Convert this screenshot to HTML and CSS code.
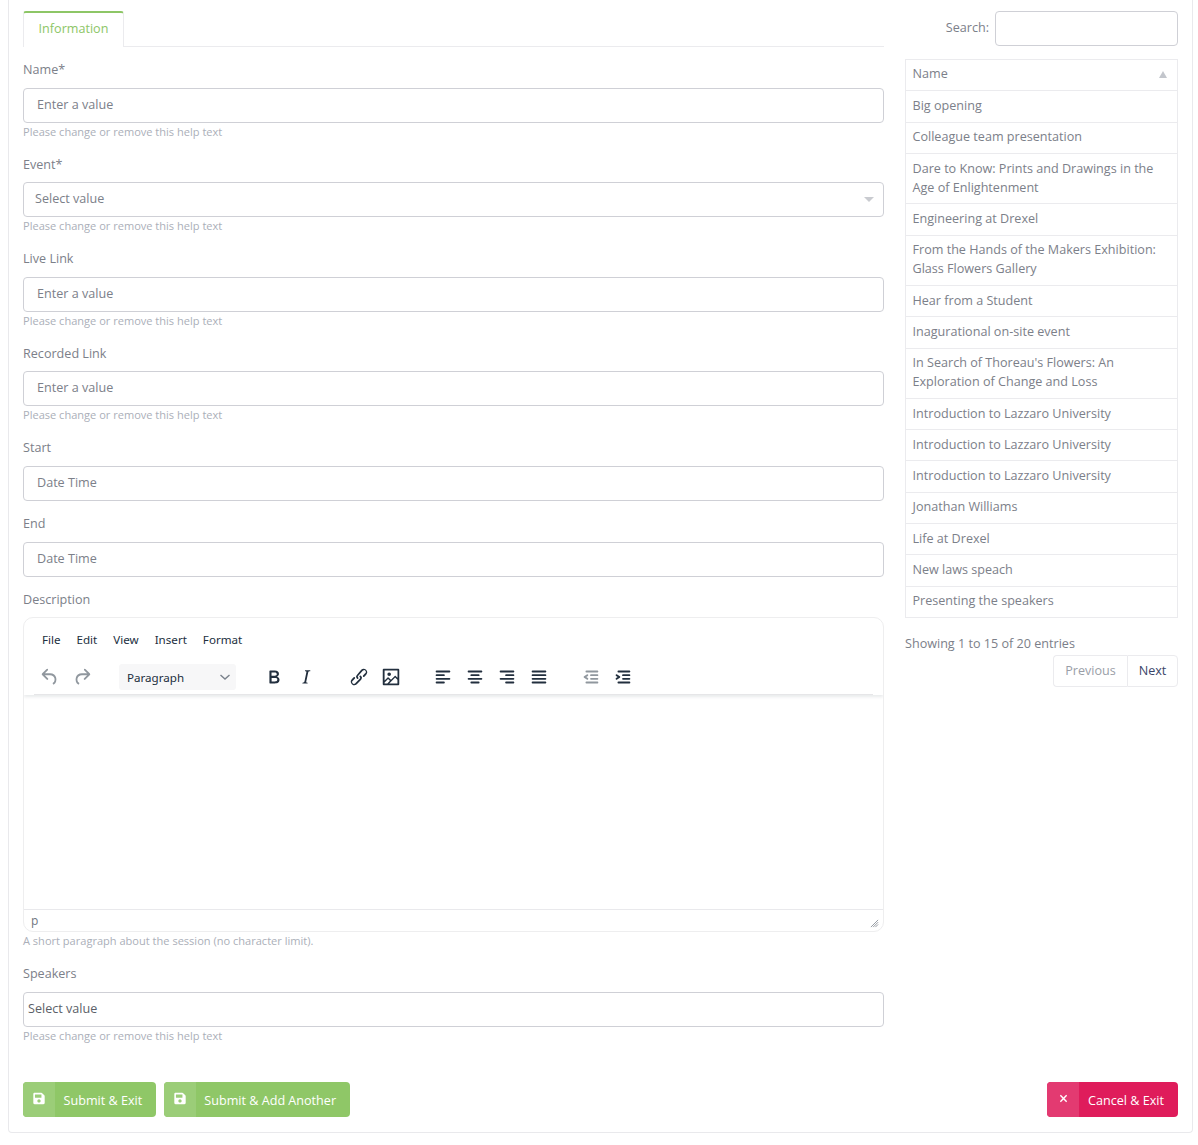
FILE: index.html
```html
<!DOCTYPE html>
<html lang="en">
<head>
<meta charset="utf-8">
<title>Session form</title>
<link rel="stylesheet" href="styles.css">
</head>
<body>
<main class="card">
  <div class="columns">
    <form class="form-col">
      <div class="tabs"><a class="tab">Information</a></div>

      <div class="group">
        <label class="label">Name*</label>
        <div class="input">Enter a value</div>
        <div class="help">Please change or remove this help text</div>
      </div>
      <div class="group">
        <label class="label">Event*</label>
        <div class="input select"><span>Select value</span><i class="caret"></i></div>
        <div class="help">Please change or remove this help text</div>
      </div>
      <div class="group">
        <label class="label">Live Link</label>
        <div class="input">Enter a value</div>
        <div class="help">Please change or remove this help text</div>
      </div>
      <div class="group">
        <label class="label">Recorded Link</label>
        <div class="input">Enter a value</div>
        <div class="help">Please change or remove this help text</div>
      </div>
      <div class="group compact">
        <label class="label">Start</label>
        <div class="input">Date Time</div>
      </div>
      <div class="group">
        <label class="label">End</label>
        <div class="input">Date Time</div>
      </div>
      <div class="group">
        <label class="label">Description</label>
        <div class="editor">
          <div class="editor-head">
            <div class="menubar">
              <span>File</span><span>Edit</span><span>View</span><span>Insert</span><span>Format</span>
            </div>
            <div class="toolbar">
              <div class="tool-group">
                <button type="button" class="tool off"><svg viewBox="0 0 24 24"><path d="M6.4 8H12c3.7 0 6.2 2 6.8 5.1.6 2.7-.4 5.6-2.3 6.8a1 1 0 0 1-1-1.8c1.1-.6 1.8-2.7 1.4-4.6-.5-2.1-2.1-3.5-4.9-3.5H6.4l3.3 3.3a1 1 0 1 1-1.4 1.4l-5-5a1 1 0 0 1 0-1.4l5-5a1 1 0 0 1 1.4 1.4L6.4 8z"/></svg></button>
                <button type="button" class="tool off"><svg viewBox="0 0 24 24"><path transform="matrix(-1 0 0 1 24 0)" d="M6.4 8H12c3.7 0 6.2 2 6.8 5.1.6 2.7-.4 5.6-2.3 6.8a1 1 0 0 1-1-1.8c1.1-.6 1.8-2.7 1.4-4.6-.5-2.1-2.1-3.5-4.9-3.5H6.4l3.3 3.3a1 1 0 1 1-1.4 1.4l-5-5a1 1 0 0 1 0-1.4l5-5a1 1 0 0 1 1.4 1.4L6.4 8z"/></svg></button>
              </div>
              <div class="format-select"><span>Paragraph</span><svg viewBox="0 0 10 10"><path d="M.5 3l4.5 4 4.5-4"/></svg></div>
              <div class="tool-group gap-bold">
                <button type="button" class="tool"><svg viewBox="0 0 24 24"><path d="M7.8 19c-.3 0-.5 0-.6-.2l-.2-.5V5.7c0-.2 0-.4.2-.5l.6-.2h5c1.5 0 2.7.3 3.5 1 .7.6 1.1 1.4 1.1 2.5a3 3 0 0 1-.6 1.9c-.4.6-1 1-1.6 1.2.4.1.9.3 1.3.6s.8.7 1 1.2c.4.4.5 1 .5 1.6 0 1.3-.4 2.3-1.3 3-.8.7-2.1 1-3.8 1H7.8zm5-8.3c.6 0 1.2-.1 1.6-.5.4-.3.6-.7.6-1.3 0-1.1-.8-1.7-2.3-1.7H9.3v3.5h3.4zm.5 6c.7 0 1.3-.1 1.7-.4.4-.4.6-.9.6-1.5s-.2-1-.7-1.4c-.4-.3-1-.4-2-.4H9.4v3.8h4z"/></svg></button>
                <button type="button" class="tool"><svg viewBox="0 0 24 24"><path d="M16.7 4.7l-.1.9h-.3c-.6 0-1 0-1.4.3-.3.3-.4.6-.5 1.1l-2.1 9.8v.6c0 .5.4.8 1.4.8h.2l-.2.8H8l.2-.8h.2c1.1 0 1.8-.5 2-1.5l2-9.8.1-.5c0-.6-.4-.8-1.4-.8h-.3l.2-.9h5.8z"/></svg></button>
              </div>
              <div class="tool-group gap-link">
                <button type="button" class="tool"><svg viewBox="0 0 24 24"><path d="M6.2 12.3a1 1 0 0 1 1.4 1.4l-2 2a2 2 0 1 0 2.6 2.8l4.8-4.8a1 1 0 0 0 0-1.4 1 1 0 1 1 1.4-1.3 2.9 2.9 0 0 1 0 4L9.6 20a3.9 3.9 0 0 1-5.5-5.5l2-2.2zm11.6-.6a1 1 0 0 1-1.4-1.4l2-2a2 2 0 1 0-2.6-2.8L11 10.9a1 1 0 0 0 0 1.4 1 1 0 1 1-1.4 1.4 2.9 2.9 0 0 1 0-4L14.4 4a3.9 3.9 0 0 1 5.5 5.5l-2 2.2z"/></svg></button>
                <button type="button" class="tool"><svg viewBox="0 0 24 24"><path d="M5 15.7l3.3-3.2c.3-.3.7-.3 1 0L12 15l4.1-4c.3-.4.8-.4 1 0l2 1.9V5H5v10.7zM5 18V19h3l2.8-2.9-2-2L5 17.9zm14-3l-2.5-2.4-6.4 6.5H19v-4zM4 3h16c.6 0 1 .4 1 1v16c0 .6-.4 1-1 1H4a1 1 0 0 1-1-1V4c0-.6.4-1 1-1zm6 8a2 2 0 1 0 0-4 2 2 0 0 0 0 4z"/></svg></button>
              </div>
              <div class="tool-group gap-align">
                <button type="button" class="tool"><svg viewBox="0 0 24 24"><path d="M5 5h14c.6 0 1 .4 1 1s-.4 1-1 1H5a1 1 0 1 1 0-2zm0 4h8c.6 0 1 .4 1 1s-.4 1-1 1H5a1 1 0 1 1 0-2zm0 8h8c.6 0 1 .4 1 1s-.4 1-1 1H5a1 1 0 0 1 0-2zm0-4h14c.6 0 1 .4 1 1s-.4 1-1 1H5a1 1 0 0 1 0-2z"/></svg></button>
                <button type="button" class="tool"><svg viewBox="0 0 24 24"><path d="M5 5h14c.6 0 1 .4 1 1s-.4 1-1 1H5a1 1 0 1 1 0-2zm3 4h8c.6 0 1 .4 1 1s-.4 1-1 1H8a1 1 0 1 1 0-2zm0 8h8c.6 0 1 .4 1 1s-.4 1-1 1H8a1 1 0 0 1 0-2zm-3-4h14c.6 0 1 .4 1 1s-.4 1-1 1H5a1 1 0 0 1 0-2z"/></svg></button>
                <button type="button" class="tool"><svg viewBox="0 0 24 24"><path d="M5 5h14c.6 0 1 .4 1 1s-.4 1-1 1H5a1 1 0 1 1 0-2zm6 4h8c.6 0 1 .4 1 1s-.4 1-1 1h-8a1 1 0 0 1 0-2zm0 8h8c.6 0 1 .4 1 1s-.4 1-1 1h-8a1 1 0 0 1 0-2zm-6-4h14c.6 0 1 .4 1 1s-.4 1-1 1H5a1 1 0 0 1 0-2z"/></svg></button>
                <button type="button" class="tool narrow"><svg viewBox="0 0 24 24"><path d="M5 5h14c.6 0 1 .4 1 1s-.4 1-1 1H5a1 1 0 1 1 0-2zm0 4h14c.6 0 1 .4 1 1s-.4 1-1 1H5a1 1 0 1 1 0-2zm0 4h14c.6 0 1 .4 1 1s-.4 1-1 1H5a1 1 0 0 1 0-2zm0 4h14c.6 0 1 .4 1 1s-.4 1-1 1H5a1 1 0 0 1 0-2z"/></svg></button>
              </div>
              <div class="tool-group gap-link">
                <button type="button" class="tool off"><svg viewBox="0 0 24 24"><path d="M7 5h12c.6 0 1 .4 1 1s-.4 1-1 1H7a1 1 0 1 1 0-2zm5 4h7c.6 0 1 .4 1 1s-.4 1-1 1h-7a1 1 0 0 1 0-2zm0 4h7c.6 0 1 .4 1 1s-.4 1-1 1h-7a1 1 0 0 1 0-2zm-5 4h12a1 1 0 0 1 0 2H7a1 1 0 0 1 0-2zm1.6-3.8a1 1 0 0 1-1.2 1.6l-3-2a1 1 0 0 1 0-1.6l3-2a1 1 0 0 1 1.2 1.6L6.8 12l1.8 1.2z"/></svg></button>
                <button type="button" class="tool"><svg viewBox="0 0 24 24"><path d="M7 5h12c.6 0 1 .4 1 1s-.4 1-1 1H7a1 1 0 1 1 0-2zm5 4h7c.6 0 1 .4 1 1s-.4 1-1 1h-7a1 1 0 0 1 0-2zm0 4h7c.6 0 1 .4 1 1s-.4 1-1 1h-7a1 1 0 0 1 0-2zm-5 4h12a1 1 0 0 1 0 2H7a1 1 0 0 1 0-2zm-2.6-3.8L6.2 12l-1.8-1.2a1 1 0 0 1 1.2-1.6l3 2a1 1 0 0 1 0 1.6l-3 2a1 1 0 1 1-1.2-1.6z"/></svg></button>
              </div>
            </div>
          </div>
          <div class="editor-body"></div>
          <div class="statusbar"><span>p</span><svg class="grip" viewBox="0 0 10 10"><path d="M9 1L1 9M9 3.5L3.5 9M9 6L6 9"/></svg></div>
        </div>
        <div class="help">A short paragraph about the session (no character limit).</div>
      </div>
      <div class="group">
        <label class="label">Speakers</label>
        <div class="input plain">Select value</div>
        <div class="help">Please change or remove this help text</div>
      </div>
    </form>

    <aside class="side-col">
      <div class="search"><label>Search:</label><div class="search-box"></div></div>
      <div class="table">
        <div class="row head"><span>Name</span><i class="sort"></i></div>
        <div class="row">Big opening</div>
        <div class="row">Colleague team presentation</div>
        <div class="row">Dare to Know: Prints and Drawings in the Age of Enlightenment</div>
        <div class="row">Engineering at Drexel</div>
        <div class="row">From the Hands of the Makers Exhibition: Glass Flowers Gallery</div>
        <div class="row">Hear from a Student</div>
        <div class="row">Inagurational on-site event</div>
        <div class="row">In Search of Thoreau's Flowers: An Exploration of Change and Loss</div>
        <div class="row">Introduction to Lazzaro University</div>
        <div class="row">Introduction to Lazzaro University</div>
        <div class="row">Introduction to Lazzaro University</div>
        <div class="row">Jonathan Williams</div>
        <div class="row">Life at Drexel</div>
        <div class="row">New laws speach</div>
        <div class="row">Presenting the speakers</div>
      </div>
      <div class="info">Showing 1 to 15 of 20 entries</div>
      <div class="pager"><span class="page muted">Previous</span><span class="page active">Next</span></div>
    </aside>
  </div>

  <div class="actions">
    <div class="action-left">
      <a class="btn green"><span class="btn-icon"><svg viewBox="0 0 448 512"><path d="M433.9 129.9l-83.9-83.9A48 48 0 0 0 316.1 32H48C21.5 32 0 53.5 0 80v352c0 26.5 21.5 48 48 48h352c26.5 0 48-21.5 48-48V163.9a48 48 0 0 0-14.1-34zM224 416c-35.3 0-64-28.7-64-64s28.7-64 64-64 64 28.7 64 64-28.7 64-64 64zm96-304.5V212c0 6.6-5.4 12-12 12H76c-6.6 0-12-5.4-12-12V108c0-6.6 5.4-12 12-12h228.5c3.2 0 6.2 1.3 8.5 3.5l3.5 3.5c2.2 2.2 3.5 5.3 3.5 8.5z"/></svg></span><span class="btn-text">Submit &amp; Exit</span></a>
      <a class="btn green"><span class="btn-icon"><svg viewBox="0 0 448 512"><path d="M433.9 129.9l-83.9-83.9A48 48 0 0 0 316.1 32H48C21.5 32 0 53.5 0 80v352c0 26.5 21.5 48 48 48h352c26.5 0 48-21.5 48-48V163.9a48 48 0 0 0-14.1-34zM224 416c-35.3 0-64-28.7-64-64s28.7-64 64-64 64 28.7 64 64-28.7 64-64 64zm96-304.5V212c0 6.6-5.4 12-12 12H76c-6.6 0-12-5.4-12-12V108c0-6.6 5.4-12 12-12h228.5c3.2 0 6.2 1.3 8.5 3.5l3.5 3.5c2.2 2.2 3.5 5.3 3.5 8.5z"/></svg></span><span class="btn-text">Submit &amp; Add Another</span></a>
    </div>
    <a class="btn pink"><span class="btn-icon"><svg viewBox="0 0 10 10"><path class="x" d="M1.5 1.5l7 7M8.5 1.5l-7 7"/></svg></span><span class="btn-text">Cancel &amp; Exit</span></a>
  </div>
</main>
</body>
</html>
```

FILE: styles.css
```css
* { box-sizing: border-box; }
html, body { margin: 0; padding: 0; background: #fff; }
body {
  font-family: "Open Sans", "Liberation Sans", sans-serif;
  font-size: 12.6px;
  color: #7c8089;
}
.card {
  margin: 0 5px 12px 8px;
  height: 1133px;
  padding: 11px 14px 15px;
  border: 1px solid #e9e9ec;
  border-top: 0;
  border-radius: 0 0 4px 4px;
  display: flex;
  flex-direction: column;
  justify-content: space-between;
}
.columns { display: flex; gap: 21px; align-items: flex-start; }
.form-col { width: 861px; flex: none; }
.side-col { width: 273px; flex: none; }

.tabs { height: 36px; border-bottom: 1px solid #ebebee; margin-bottom: 12.3px; }
.tab {
  display: block;
  width: 101px;
  height: 36px;
  border: 1px solid #ebebee;
  border-top: 2px solid #8dc666;
  border-bottom: 0;
  border-radius: 3px 3px 0 0;
  background: #fff;
  color: #8dc666;
  text-align: center;
  line-height: 31px;
}

.group { margin-bottom: 11.95px; }
.group.compact { margin-bottom: 12.3px; }
.label { display: block; height: 20px; line-height: 22.6px; margin-bottom: 8.5px; }
.input {
  height: 35.1px;
  border: 1px solid #cfd0d6;
  border-radius: 4px;
  padding: 0 13px;
  line-height: 31px;
  color: #7c8089;
}
.select { display: flex; justify-content: space-between; align-items: center; padding: 0 9px 3px 11px; }
.caret {
  width: 0; height: 0;
  border-left: 5px solid transparent;
  border-right: 5px solid transparent;
  border-top: 5px solid #c9cbd0;
  margin-top: 3px;
}
.plain { padding: 0 4px; color: #5c5f68; }
.help { height: 19px; line-height: 18px; font-size: 11.06px; color: #abafb9; }

.editor {
  height: 315px;
  border: 1px solid #eeeeef;
  border-radius: 10px;
  display: flex;
  flex-direction: column;
  overflow: hidden;
}
.editor-head { height: 77px; padding: 0 10px; box-shadow: 0 2px 3px rgba(34, 47, 62, .1); position: relative; }
.menubar {
  height: 45px;
  padding: 13px 0 0 8px;
  display: flex;
  gap: 16px;
  font-family: "Noto Sans", "Open Sans", sans-serif;
  font-size: 11.6px;
  line-height: 18px;
  color: #222f3e;
}
.toolbar {
  box-sizing: content-box;
  height: 28px;
  padding-bottom: 3px;
  display: flex;
  align-items: center;
  border-bottom: 1px solid #e6e6e8;
}
.tool-group { display: flex; }
.gap-bold { margin-left: 22px; }
.gap-link { margin-left: 21px; }
.gap-align { margin-left: 20px; }
.tool {
  width: 32px;
  height: 28px;
  padding: 0;
  border: 0;
  background: none;
  display: flex;
  align-items: center;
  justify-content: center;
}
.tool.narrow { width: 31px; }
.tool svg { width: 22px; height: 22px; flex: none; fill: #222f3e; }
.tool.off svg { fill: rgba(34, 47, 62, .5); }
.format-select {
  width: 117px;
  height: 26px;
  margin-left: 21px;
  padding: 0 6px 0 8px;
  border-radius: 3px;
  background: #f7f7f8;
  display: flex;
  align-items: center;
  justify-content: space-between;
  font-family: "Noto Sans", "Open Sans", sans-serif;
  font-size: 11.6px;
  color: #222f3e;
}
.format-select svg { width: 10px; height: 10px; fill: none; stroke: #7a828c; stroke-width: 1.4; }
.editor-body { flex: 1; }
.statusbar {
  height: 22px;
  border-top: 1px solid #e9e9ec;
  padding: 0 7px;
  display: flex;
  align-items: center;
  justify-content: space-between;
  color: #6f7680;
  font-size: 12px;
}
.grip { width: 9px; height: 9px; margin: 5px -3px 0 0; fill: none; stroke: #8c929a; stroke-width: 1; }

.search { height: 35px; display: flex; justify-content: flex-end; align-items: center; gap: 6px; margin-bottom: 13px; }
.search label { margin-top: -2px; }
.search-box { width: 183px; height: 35px; border: 1px solid #cfd0d6; border-radius: 4px; }
.table { border: 1px solid #ebebee; border-bottom: 0; }
.row {
  padding: 4.7px 6.5px 6.64px;
  line-height: 19px;
  border-bottom: 1px solid #ebebee;
}
.head { display: flex; justify-content: space-between; align-items: center; padding: 4.37px 10px 6.97px 6.5px; }
.sort {
  width: 0; height: 0;
  border-left: 4px solid transparent;
  border-right: 4px solid transparent;
  border-bottom: 7px solid #c3c6cc;
  margin-top: 1px;
}
.info { margin-top: 16px; line-height: 19px; }
.pager { display: flex; justify-content: flex-end; margin-top: 2px; }
.page { height: 32px; line-height: 29px; padding: 0 11px; border: 1px solid #ebebee; }
.page.muted { width: 74px; text-align: center; padding: 0; border-right: 0; border-radius: 4px 0 0 4px; color: #9a9ea7; }
.page.active { width: 51px; text-align: center; padding: 0; border-radius: 0 4px 4px 0; color: #3a4468; }

.actions { display: flex; justify-content: space-between; }
.action-left { display: flex; gap: 8px; }
.btn { height: 35px; display: flex; border-radius: 4px; color: #fff; overflow: hidden; }
.btn-icon { width: 32px; display: flex; justify-content: center; padding-top: 10px; }
.btn-icon svg { width: 12px; height: 13px; fill: #fff; }
.btn-text { padding: 0 13.5px 0 8.6px; line-height: 38px; }
.green { background: #8fc767; }
.green .btn-icon { background: #9bcd78; }
.pink { background: #df1c5b; }
.pink .btn-icon { background: #e33a71; padding-top: 12px; }
.pink .btn-icon svg { width: 9px; height: 9px; }
.pink .btn-text { padding-right: 14px; }
.x { fill: none; stroke: #fff; stroke-width: 1.6; }
```
